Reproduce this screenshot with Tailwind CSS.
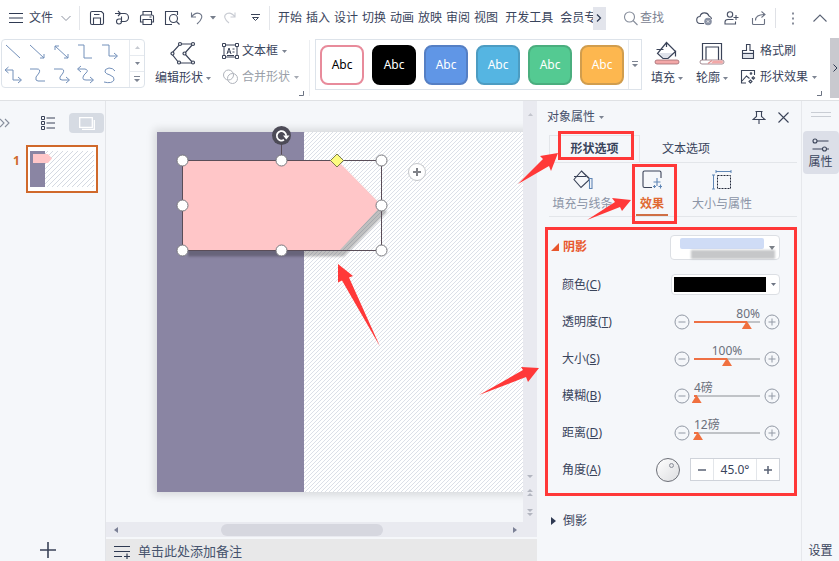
<!DOCTYPE html>
<html lang="zh-CN">
<head>
    <meta charset="UTF-8">
    <meta name="viewport" content="width=device-width, initial-scale=1.0">
    <title>演示文稿 - 对象属性</title>
    <script src="https://cdn.jsdelivr.net/npm/@tailwindcss/browser@4"></script>
</head>
<body class="h-screen flex flex-col overflow-hidden bg-[#f5f7fa] text-xs text-[#39445c] font-['Noto_Sans','Noto_Sans_CJK_SC',sans-serif]">

    <!-- Menu bar -->
    <header class="h-9 shrink-0 flex items-center bg-white whitespace-nowrap">
        <button class="w-[79px] h-6 pl-2 flex items-center gap-[5px] shrink-0">
            <svg class="w-4 h-4" viewBox="0 0 16 16" stroke="#2f3a52" stroke-width="1.2"><path d="M1 3.5h14M1 8h14M1 12.5h14"/></svg>
            文件
            <svg class="w-3 h-3 ml-0.5" viewBox="0 0 12 12" fill="none" stroke="#8d93a1"><path d="M1.500 4l4.500 4.500L10.500 4"/></svg>
        </button>
        <div class="h-6 pl-1 border-x border-[#e4e6ea] flex items-center shrink-0">
            <button aria-label="保存" class="w-[25px] flex justify-center"><svg class="w-4 h-4" viewBox="0 0 16 16" fill="none" stroke="#3a4358" stroke-width="1.1"><path d="M1.500 3q0-1.500 1.500-1.500h9.500l2 2V13q0 1.500-1.500 1.500H3q-1.500 0-1.500-1.500zM4.500 14V8h7v6M5 4.500h5.500"/></svg></button>
            <button aria-label="输出" class="w-[25px] flex justify-center"><svg class="w-4 h-4" viewBox="0 0 16 16" fill="none" stroke="#3a4358" stroke-width="1.1"><path d="M1 3.500h9.500a4 4 0 0 1 0 8H6.500M4 1l2.500 2.500L4 6M7.500 6.500v5a2.500 2.500 0 1 1-2.500-2.500h2.500"/></svg></button>
            <button aria-label="打印" class="w-[25px] flex justify-center"><svg class="w-4 h-4" viewBox="0 0 16 16" fill="none" stroke="#3a4358" stroke-width="1.1"><path d="M4 5V1.500h8.500V5M4 12H1.500V6.500Q1.500 5 3 5h10q1.500 0 1.500 1.500V12H12.500M4 9.500h8.500v5H4zM10.500 7h2"/></svg></button>
            <button aria-label="打印预览" class="w-[25px] flex justify-center"><svg class="w-4 h-4" viewBox="0 0 16 16" fill="none" stroke="#3a4358" stroke-width="1.1"><path d="M13.500 5V1.500h-12v13H8"/><circle cx="9.500" cy="8.500" r="4"/><path d="M12.500 11.500l3 3"/></svg></button>
            <button aria-label="撤销" class="w-[25px] flex justify-center"><svg class="w-4 h-4" viewBox="0 0 16 16" fill="none" stroke="#6f7788" stroke-width="1.1"><path d="M2.500 2.500v4.500h4.500M2.500 7C5 3.500 8 2.500 10.500 3.500c4 2 2.500 6-2.500 10.500"/></svg></button>
            <button aria-label="撤销列表" class="w-2 flex justify-center"><svg class="w-[6px] h-[4px]" viewBox="0 0 6 4" fill="#777e8c"><path d="M0 0h6L3 3.500z"/></svg></button>
            <button aria-label="恢复" class="w-[25px] flex justify-center"><svg class="w-4 h-4" viewBox="0 0 16 16" fill="none" stroke="#c9ccd3" stroke-width="1.100"><path d="M13 2.500v4.500H8.500M13 7C10.500 3.500 7.500 2.500 5 3.500 1 5.500 2.500 9.500 7 13"/></svg></button>
            <button aria-label="自定义" class="w-[27px] flex justify-center"><svg class="w-[9px] h-2" viewBox="0 0 9 8" fill="none" stroke="#3a4358"><path d="M0 .5h9M1.500 3.500h6l-3 3z"/></svg></button>
        </div>
        <nav class="flex-1 min-w-0 overflow-hidden pl-2 flex gap-1">
            <a href="#">开始</a>
            <a href="#">插入</a>
            <a href="#">设计</a>
            <a href="#">切换</a>
            <a href="#">动画</a>
            <a href="#">放映</a>
            <a href="#">审阅</a>
            <a href="#">视图</a>
            <a href="#" class="mx-[3px]">开发工具</a>
            <a href="#">会员专享</a>
        </nav>
        <div class="shrink-0 flex items-center pr-3">
            <button aria-label="更多选项卡" class="w-[13px] h-[23px] bg-[#e3e5ec] flex items-center justify-center"><svg class="w-[6px] h-2" viewBox="0 0 6 8" fill="none" stroke="#2f3a52" stroke-width="1.200"><path d="M1 .5L4.500 4 1 7.500"/></svg></button>
            <button class="ml-[17px] flex items-center gap-px text-[#7b8291]">
                <svg class="w-4 h-4" viewBox="0 0 16 16" fill="none" stroke="#868d9b" stroke-width="1.100"><circle cx="6.500" cy="7" r="5"/><path d="M10 10.500l4.500 4.500"/></svg>
                查找
            </button>
            <button aria-label="云同步" class="ml-8"><svg class="block w-[17px] h-4" viewBox="0 0 17 16" fill="none" stroke="#4a5266" stroke-width="1.100"><path d="M8 13.500H4.500a3.500 3.500 0 0 1-.5-7 4.700 4.700 0 0 1 9-.5q2.500 1 2.500 3"/><circle cx="12" cy="11.500" r="3.200" fill="#8991a3" stroke="#8991a3"/><path d="M10.800 10.300l2.400 2.400M13.200 10.300l-2.400 2.400" stroke="#fff" stroke-width=".8"/></svg></button>
            <button aria-label="协作" class="ml-[11px]"><svg class="block w-[15px] h-4" viewBox="0 0 15 16" fill="none" stroke="#4a5266" stroke-width="1.100"><circle cx="6" cy="4.500" r="2.700"/><path d="M9.500 9.500H4Q1 9.500 1 12v2h10.500v-2.500M12 5v5M9.500 7.500h5"/></svg></button>
            <button aria-label="分享" class="ml-3"><svg class="block w-4 h-4" viewBox="0 0 16 16" fill="none" stroke="#6b7283" stroke-width="1.100"><path d="M1.500 8v5.500q0 1 1 1h10q1 0 1-1V9M4.500 10.500c0-4 3-6 9-6M10.500 1.500l3.500 3-3.500 3"/></svg></button>
            <span class="ml-2 h-5 border-l border-[#dfe1e6]"></span>
            <button aria-label="更多" class="ml-[15px]"><svg class="block w-1 h-4" viewBox="0 0 4 16" fill="#6b7283"><path d="M1.200 2.500h1.600v2H1.200zM1.200 7.500h1.600v2H1.200zM1.200 12.500h1.600v2H1.200z"/></svg></button>
            <button aria-label="收起功能区" class="ml-[18px]"><svg class="block w-[14px] h-4" viewBox="0 0 14 16" fill="none" stroke="#5a6274" stroke-width="1.100"><path d="M.5 11.500L7 5l6.500 6.500"/></svg></button>
        </div>
    </header>

    <!-- Ribbon -->
    <section class="h-[65px] shrink-0 flex bg-white border-b border-[#dfe1e4] whitespace-nowrap">
        <!-- Connector gallery -->
        <div class="ml-px mt-[3px] w-[144px] h-[49px] shrink-0 flex border border-[#dde3ea] rounded-sm">
            <svg class="w-[127px] h-[47px]" viewBox="0 0 127 47" fill="none" stroke="#7390ba">
                <path d="M4 5l14 13M28 5l14 13M42 14v4h-4M53 6l13 12M53 10V6h4M66 14v4h-4M76 5h6v13h8M100 5h7v11h8M112 13l3.500 3-3.500 3"/>
                <path d="M4 30h7v10h8M6.500 27L3 30l3.500 3M16 37l3.500 3-3.500 3M28 29h7q4 0 2 4l-3 4q-1 4 2 4h7M52 29h7q4 0 2 4l-3 4q-1 3 2 3h7M64 37l3.500 3-3.500 3M76 29h7q4 1 1 4l-2 2q-3 5 2 5h7M79 26l-3.500 3 3.500 3M88 37l3.500 3-3.500 3M113 31q-2-3-6-3-5 1-4 4 1 2 5 3 5 2 4 5-2 4-10 2"/>
            </svg>
            <div class="flex-1 flex flex-col border-l border-[#e6eaef]">
                <button aria-label="上一行" class="flex-1 flex items-center justify-center border-b border-[#e6eaef]"><svg class="w-[5px] h-[3px]" viewBox="0 0 5 3" fill="#c6cad1"><path d="M0 3h5L2.500 0z"/></svg></button>
                <button aria-label="下一行" class="flex-1 flex items-center justify-center border-b border-[#e6eaef]"><svg class="w-[5px] h-[3px]" viewBox="0 0 5 3" fill="#7d8492"><path d="M0 0h5L2.500 3z"/></svg></button>
                <button aria-label="展开形状" class="flex-1 flex items-center justify-center"><svg class="w-[6px] h-[7px]" viewBox="0 0 6 7" fill="#7d8492"><path d="M0 0h6v1H0zM0 3h6L3 6z"/></svg></button>
            </div>
        </div>
        <button class="ml-[10px] mt-1 h-[46px] flex flex-col items-center justify-between shrink-0">
            <svg class="w-[26px] h-[26px]" viewBox="0 0 26 26" fill="none" stroke="#3a4358" stroke-width="1.200"><path d="M10 4h13L14.500 13.500 23 23H9L1.500 13.500z"/><g fill="#fff"><circle cx="10" cy="4" r="1.500"/><circle cx="23" cy="4" r="1.500"/><circle cx="14.500" cy="13.500" r="1.500"/><circle cx="2.500" cy="13.500" r="1.500"/><circle cx="9" cy="22.500" r="1.500"/><circle cx="23" cy="22.500" r="1.500"/></g></svg>
            <span class="h-4 leading-4 flex items-center gap-[3px]">编辑形状 <svg class="w-[5px] h-[3px]" viewBox="0 0 5 3" fill="#7d8492"><path d="M0 0h5L2.500 3z"/></svg></span>
        </button>
        <div class="ml-[11px] mt-1 h-[49px] flex flex-col justify-between pt-[3px] pb-1 shrink-0">
            <button class="h-4 flex items-center gap-[3px]">
                <svg class="w-[17px] h-4" viewBox="0 0 17 16" fill="none" stroke="#3a4358"><path d="M2 2h13v12H2z"/><g fill="#fff"><path d="M.5.5h3v3h-3zM13.500.5h3v3h-3zM.5 12.500h3v3h-3zM13.500 12.500h3v3h-3z"/></g><path d="M5 11l2-6 2 6M5.500 9h3M5 12.500h7M10.500 6h2M10.500 9h2"/></svg>
                文本框 <svg class="w-[5px] h-[3px] ml-px" viewBox="0 0 5 3" fill="#7d8492"><path d="M0 0h5L2.500 3z"/></svg>
            </button>
            <button class="h-4 flex items-center gap-[3px] text-[#9a9fa9]">
                <svg class="w-[17px] h-4" viewBox="0 0 17 16" fill="none" stroke="#b0b4bc"><circle cx="6.500" cy="6" r="5"/><circle cx="10.500" cy="9.500" r="5"/></svg>
                合并形状 <svg class="w-[5px] h-[3px] ml-px" viewBox="0 0 5 3" fill="#a5a9b2"><path d="M0 0h5L2.500 3z"/></svg>
            </button>
        </div>
        <button aria-label="形状设置" class="self-end mb-1 mr-[5px] shrink-0"><svg class="block w-[5px] h-[5px]" viewBox="0 0 5 5" fill="none" stroke="#6d7483"><path d="M4.500 0v4.500H0"/></svg></button>

        <!-- Shape styles -->
        <div class="border-l border-[#eceef1] mt-1 mb-1 shrink-0"></div>
        <div class="ml-[5px] mt-[3px] w-[327px] h-[51px] shrink-0 pl-1 flex items-center gap-2 border border-[#dde3ea] text-white">
            <button class="w-11 h-10 shrink-0 rounded-lg border-2 border-[#e88b9b] bg-white text-black">Abc</button>
            <button class="w-11 h-10 shrink-0 rounded-lg border-2 border-black bg-black">Abc</button>
            <button class="w-11 h-10 shrink-0 rounded-lg border-2 border-[#557fc4] bg-[#6096e6]">Abc</button>
            <button class="w-11 h-10 shrink-0 rounded-lg border-2 border-[#4c9cc2] bg-[#55b5e2]">Abc</button>
            <button class="w-11 h-10 shrink-0 rounded-lg border-2 border-[#4aae7e] bg-[#54ca92]">Abc</button>
            <button class="w-11 h-10 shrink-0 rounded-lg border-2 border-[#d19d4d] bg-[#fdb74f]">Abc</button>
            <button aria-label="更多样式" class="-ml-1 flex-1 h-full flex items-center justify-center border-l border-[#e6eaef]"><svg class="w-[6px] h-[7px]" viewBox="0 0 6 7" fill="#7d8492"><path d="M0 0h6v1H0zM0 3h6L3 6z"/></svg></button>
        </div>
        <button class="ml-[9px] mt-1 h-[46px] flex flex-col items-center justify-between shrink-0">
            <svg class="w-[26px] h-[26px]" viewBox="0 0 26 26" fill="none" stroke="#3a4358" stroke-width="1.200"><path d="M5 13h16l-6 5.500h-5z" fill="#dfe2ea" stroke="none"/><path d="M12.500 3v4M2.500 9.500h7M12.500 2.500l9 9-7.500 7H9L3.500 13.500zM21.500 10.500v6"/><rect x="1" y="20" width="24" height="4" rx="2" fill="#f3a8a8" stroke="#a06a70" stroke-width=".8"/></svg>
            <span class="h-4 leading-4 flex items-center gap-[3px]">填充 <svg class="w-[5px] h-[3px]" viewBox="0 0 5 3" fill="#7d8492"><path d="M0 0h5L2.500 3z"/></svg></span>
        </button>
        <button class="ml-[13px] mt-1 h-[46px] flex flex-col items-center justify-between shrink-0">
            <svg class="w-[26px] h-[26px]" viewBox="0 0 26 26" fill="none" stroke="#3a4358" stroke-width="1.200"><path d="M3.500 20V3.500h19V20M7 20V7h12.500v13"/><rect x="1" y="20" width="24" height="4" rx="2" fill="#fff" stroke="#8b7078" stroke-width=".8"/><path d="M9 23.500l4-3" stroke="#e08a8a"/><path d="M14 20.500h9.500q1 1.500 0 3H12z" fill="#f3a8a8" stroke="none"/></svg>
            <span class="h-4 leading-4 flex items-center gap-[3px]">轮廓 <svg class="w-[5px] h-[3px]" viewBox="0 0 5 3" fill="#7d8492"><path d="M0 0h5L2.500 3z"/></svg></span>
        </button>
        <div class="ml-3 mt-1 h-[49px] flex flex-col justify-between pt-[3px] pb-1 shrink-0">
            <button class="h-4 flex items-center gap-1">
                <svg class="w-4 h-4" viewBox="0 0 16 16" fill="none" stroke="#3a4358" stroke-width="1.100"><path d="M3 9h10v6H3z" fill="#dfe3ea" stroke="none"/><path d="M2.500 15.500V7.500h4v-6h3.500v6h3.500v8zM2.500 10.500h11"/></svg>
                格式刷
            </button>
            <button class="h-4 flex items-center gap-1">
                <svg class="w-4 h-4" viewBox="0 0 16 16" fill="none" stroke="#3a4358" stroke-width="1.100"><path d="M4 1.500H1.500V14H6M1.500 1.500h13V6M2 12l4.500-5 3 2.500M9 12.500l1.500-1.500L12 12.500l-1.500 1.500zM12 9l1.300-1.300L14.600 9l-1.300 1.300z"/><circle cx="11" cy="4.500" r=".8"/></svg>
                形状效果 <svg class="w-[5px] h-[3px]" viewBox="0 0 5 3" fill="#7d8492"><path d="M0 0h5L2.500 3z"/></svg>
            </button>
        </div>
        <button aria-label="效果设置" class="self-end mb-1 ml-auto mr-2 shrink-0"><svg class="block w-[5px] h-[5px]" viewBox="0 0 5 5" fill="none" stroke="#6d7483"><path d="M4.500 0v4.500H0"/></svg></button>
        <button aria-label="向右滚动" class="mt-0.5 mb-[2px] w-[10px] shrink-0 bg-[#c9c9cf] flex items-center justify-center"><svg class="w-[5px] h-2" viewBox="0 0 5 8" fill="none" stroke="#2f3a52"><path d="M.5.5L4 4 .5 7.500"/></svg></button>
    </section>

    <div class="flex-1 min-h-0 flex">

        <!-- Slide list -->
        <aside class="w-[106px] shrink-0 flex flex-col border-r border-[#e3e5e9]">
            <div class="mt-3 h-5 flex items-center">
                <button aria-label="收起"><svg class="block w-[10px] h-[10px]" viewBox="0 0 10 10" fill="none" stroke="#878e9c" stroke-width="1.100"><path d="M0 1l4 4-4 4M5 1l4 4-4 4"/></svg></button>
                <button aria-label="大纲" class="ml-[31px]"><svg class="block w-[14px] h-[14px]" viewBox="0 0 14 14" fill="none" stroke="#3a4358"><path d="M.5.5h3v3h-3zM.5 5.500h3v3h-3zM.5 10.500h3v3h-3zM5.500 2h8.500M5.500 7h8.500M5.500 12h8.500"/></svg></button>
                <button aria-label="幻灯片" class="ml-[14px] w-[35px] h-5 rounded-sm bg-[#d6dbe3] flex items-center justify-center"><svg class="w-4 h-[13px]" viewBox="0 0 16 13" fill="none" stroke="#fff" stroke-width="1.300"><path d="M.7.7h12.600v9.600H.7zM3 12.300h12.300V3"/></svg></button>
            </div>
            <div class="mt-3 pl-[13px] flex items-start gap-[6px]">
                <span class="w-[7px] mt-2 leading-4 font-bold text-[#cf6a2c]">1</span>
                <button aria-label="幻灯片 1" class="border-2 border-[#d0692b] bg-white p-0.5">
                    <svg class="block w-16 h-10" viewBox="0 0 64 40">
                        <defs><pattern id="hatch-small" width="5" height="5" patternUnits="userSpaceOnUse"><path d="M-1 1L1-1M0 5L5 0M4 6L6 4" stroke="#c9cfdb" stroke-width=".8"/></pattern></defs>
                        <rect y="2" width="64" height="36" fill="url(#hatch-small)"/>
                        <rect y="2" width="15" height="36" fill="#8a85a3"/>
                        <path d="M3 5h15l4 4.500-4 4.500H3z" fill="#ffc6c8"/>
                    </svg>
                </button>
            </div>
            <button aria-label="新建幻灯片" class="mt-auto mb-[3px] ml-10 w-4"><svg class="block w-4 h-4" viewBox="0 0 16 16" stroke="#3a4358" stroke-width="1.600"><path d="M8 0v16M0 8h16"/></svg></button>
        </aside>

        <!-- Slide editor -->
        <main class="flex-1 min-w-0 flex flex-col">
            <div class="flex-1 min-h-0 flex">
                <div class="flex-1 min-w-0 overflow-hidden pl-[51px] pt-[31px]">
                    <div class="w-[640px] h-[360px] bg-white shadow-[0_0_8px_3px_rgba(0,0,0,0.12)]">
                        <svg class="block w-full h-full overflow-visible" viewBox="0 0 640 360">
                            <defs>
                                <pattern id="hatch" width="4" height="4" patternUnits="userSpaceOnUse"><path d="M-1 1L1-1M0 4L4 0M3 5L5 3" stroke="#cdd3de" stroke-width=".7"/></pattern>
                                <filter id="soft" x="-10%" y="-10%" width="120%" height="120%"><feGaussianBlur stdDeviation="1"/></filter>
                            </defs>
                            <rect width="640" height="360" fill="url(#hatch)"/>
                            <rect width="147" height="360" fill="#8a85a3"/>
                            <path d="M31 35h154l45 45-43 44.500H31z" fill="#000" fill-opacity=".25" filter="url(#soft)"/>
                            <path d="M25.500 28.500h155l44 45-42 45h-157z" fill="#ffc6c8"/>
                            <path d="M25.500 28.500h199v90h-199zM124.500 28V12" fill="none" stroke="#5a4d58"/>
                            <g fill="#fff" stroke="#77777d">
                                <circle cx="25.500" cy="28.500" r="5.500"/><circle cx="124.500" cy="28.500" r="5.500"/><circle cx="224.500" cy="28.500" r="5.500"/>
                                <circle cx="25.500" cy="73.500" r="5.500"/><circle cx="224.500" cy="73.500" r="5.500"/>
                                <circle cx="25.500" cy="118.500" r="5.500"/><circle cx="124.500" cy="118.500" r="5.500"/><circle cx="224.500" cy="118.500" r="5.500"/>
                            </g>
                            <path d="M180 22l6.500 6.500-6.500 6.500-6.500-6.500z" fill="#fdfc80" stroke="#7a7a4e"/>
                            <circle cx="124.500" cy="3.500" r="9.500" fill="#4d4b57"/>
                            <path d="M127 7.800a4.700 4.700 0 1 1 2.200-4" fill="none" stroke="#fff" stroke-width="1.800"/><path d="M126 3.500h6.500l-3.200 4z" fill="#fff"/>
                            <circle cx="260" cy="40" r="8.500" fill="#fff" stroke="#c4c6ca"/>
                            <path d="M260 36v8M256 40h8" stroke="#808288" stroke-width="2"/>
                            <path d="M181 132l15 12-4 1.500 31 69-38-66-4 2z" fill="#ff3838"/>
                        </svg>
                    </div>
                </div>
                <div class="w-[14px] shrink-0 bg-[#e9eaf0] flex flex-col items-center pt-3 pb-[5px]">
                    <svg class="w-[5px] h-[3px]" viewBox="0 0 5 3" fill="#c3c5cd"><path d="M0 3h5L2.500 0z"/></svg>
                    <svg class="mt-auto w-[6px] h-11" viewBox="0 0 6 44" fill="#b3b6c0"><path d="M0 2h6L3 5zM0 19h6l-3-3zM0 23h6l-3-3zM0 36h6l-3 3zM0 40h6l-3 3z"/></svg>
                </div>
            </div>
            <div class="h-[15px] shrink-0 flex items-center bg-[#e9eaf0] pl-2 pr-5">
                <svg class="w-1 h-[6px]" viewBox="0 0 4 6" fill="#7b8096"><path d="M4 0v6L0 3z"/></svg>
                <div class="flex-1 flex"><div class="ml-[26%] w-[41%] h-3 rounded-full bg-[#d6d7df]"></div></div>
                <svg class="w-1 h-[6px]" viewBox="0 0 4 6" fill="#7b8096"><path d="M0 0v6l4-3z"/></svg>
            </div>
            <div class="h-6 shrink-0 flex items-center gap-2 pl-2 pt-[3px] border-t-2 border-[#f5f7fa] bg-[#e8e8e9] text-[13px] text-[#46536d]">
                <svg class="w-4 h-[14px]" viewBox="0 0 16 14" stroke="#2f3a52" stroke-width="1.200"><path d="M0 1.500h16M0 6.500h16M0 11.500h8M10 11.500h6M13 8.500v6"/></svg>
                <button>单击此处添加备注</button>
            </div>
        </main>

        <!-- Object properties -->
        <aside class="relative w-[264px] shrink-0 flex flex-col pl-2 pr-1">
            <div class="h-8 flex items-center pl-0.5 pr-2">
                <button class="flex items-center gap-1 text-[#46506a]">对象属性 <svg class="w-[5px] h-[3px]" viewBox="0 0 5 3" fill="#7d8492"><path d="M0 0h5L2.500 3z"/></svg></button>
                <button aria-label="固定" class="ml-auto"><svg class="block w-[14px] h-[14px]" viewBox="0 0 14 14" fill="none" stroke="#3a4358" stroke-width="1.100"><path d="M3.500 1.500h7M4.500 1.500v5L1 9.500h12L9.500 6.500v-5M7 9.500V14"/></svg></button>
                <button aria-label="关闭" class="ml-3"><svg class="block w-[11px] h-[11px]" viewBox="0 0 11 11" stroke="#3a4358" stroke-width="1.100"><path d="M.5.5l10 10M10.500.5l-10 10"/></svg></button>
            </div>
            <div class="h-[30px] flex border-b border-[#e3e6ea] ml-1" role="tablist">
                <button role="tab" class="mt-0.5 w-[91px] border-x border-t border-[#e3e6ea] font-bold">形状选项</button>
                <button role="tab" class="mt-0.5 w-[92px]">文本选项</button>
            </div>
            <div class="h-[54px] flex border-b border-[#e3e6ea] ml-1 text-[#8b94a6]" role="tablist">
                <button role="tab" class="w-[67px] flex flex-col items-center pt-[7px]">
                    <svg class="w-5 h-5" viewBox="0 0 20 20" fill="none" stroke="#3a4358" stroke-width="1.100"><path d="M1 6.500h12M8.500 1L1 9.500l7 8 8-7.500V8zM8.500 1l7 7"/><path d="M16.500 8.500h2.500v10h-2.500z" stroke="#5f86b5"/></svg>
                    <span class="mt-1 leading-5">填充与线条</span>
                </button>
                <button role="tab" class="ml-[20px] w-8 flex flex-col items-center pt-[7px] border-b-2 border-[#cf6f45] font-bold text-[#e06a33]">
                    <svg class="w-5 h-5 shrink-0" viewBox="0 0 20 20" fill="none" stroke="#3a4358" stroke-width="1.100"><path d="M10 17.500H2.500q-1.500 0-1.500-1.500V2.500Q1 1 2.500 1h15Q19 1 19 2.500V8"/><path d="M15 8v8M11.500 12h7M18.500 14.500v4M16.500 16.500h4M12.500 15v3M11 16.500h3" stroke="#5f86b5"/></svg>
                    <span class="mt-1 leading-5">效果</span>
                </button>
                <button role="tab" class="ml-[24px] flex flex-col items-center pt-[7px]">
                    <svg class="w-5 h-5" viewBox="0 0 20 20" fill="none" stroke="#5f86b5"><path d="M4 1.500h15M4 0v3M19 0v3M1.500 5v14M0 5h3M0 19h3"/><path d="M5.500 5.500h13v13h-13z" stroke="#1f2638" stroke-dasharray="2 1"/></svg>
                    <span class="mt-1 leading-5">大小与属性</span>
                </button>
            </div>

            <!-- Shadow settings -->
            <section class="mt-[10px] px-[14px] pb-[5px] shrink-0 border-3 border-[#ff3838]">
                <div class="h-[34px] mb-0.5 flex items-center justify-between">
                    <button class="-ml-[11px] flex items-center gap-1 font-bold text-[#e8562c]"><svg class="w-2 h-2" viewBox="0 0 8 8" fill="#e8562c"><path d="M8 0v8H0z"/></svg>阴影</button>
                    <div class="relative w-[110px]">
                        <select aria-label="阴影" class="block w-full h-[25px] appearance-none rounded-sm border border-[#dcdfe4] bg-white"><option></option></select>
                        <span class="absolute left-[10px] top-[3px] w-[84px] h-[11px] rounded-xs bg-[#cfdcf6] pointer-events-none"></span>
                        <span class="absolute left-[21px] top-[15px] w-[84px] h-[9px] bg-[#c6c7c9] blur-[1px] pointer-events-none"></span>
                        <svg class="absolute right-[5px] top-[11px] w-[6px] h-[4px] pointer-events-none" viewBox="0 0 6 4" fill="#7b8088"><path d="M0 0h6L3 4z"/></svg>
                    </div>
                </div>
                <div class="h-[37px] flex items-center justify-between">
                    <label for="color">颜色(<u>C</u>)</label>
                    <div class="relative w-[109px]">
                        <select id="color" class="block w-full h-[21px] appearance-none rounded-sm border border-[#dcdfe4] bg-white"><option></option></select>
                        <span class="absolute left-[3px] top-[3px] w-[92px] h-[15px] bg-black pointer-events-none"></span>
                        <svg class="absolute right-1 top-[9px] w-[5px] h-[3px] pointer-events-none" viewBox="0 0 5 3" fill="#6d7483"><path d="M0 0h5L2.500 3z"/></svg>
                    </div>
                </div>
                <div class="h-[37px] flex items-center">
                    <label for="alpha" class="mr-auto">透明度(<u>T</u>)</label>
                    <button aria-label="减少透明度"><svg class="block w-4 h-4" viewBox="0 0 16 16" fill="none" stroke="#9299a5"><circle cx="8" cy="8" r="7"/><path d="M4.500 8h7"/></svg></button>
                    <div class="relative w-[66px] h-[37px] mx-1 text-[#6b707c]">
                        <output for="alpha" class="block pt-[3px] h-[18px] leading-4 text-right">80%</output>
                        <div class="h-0.5" style="background:linear-gradient(90deg,#ee7044 80%,#c0c3c7 80%)"></div>
                        <input id="alpha" type="range" min="0" max="100" value="80" class="absolute -left-[5px] top-[18px] w-[76px] h-2 appearance-none bg-transparent [&::-webkit-slider-thumb]:appearance-none [&::-webkit-slider-thumb]:w-[10px] [&::-webkit-slider-thumb]:h-2 [&::-webkit-slider-thumb]:bg-[#f0703f] [&::-webkit-slider-thumb]:[clip-path:polygon(50%_0,100%_100%,0_100%)]">
                    </div>
                    <button aria-label="增加透明度"><svg class="block w-4 h-4" viewBox="0 0 16 16" fill="none" stroke="#9299a5"><circle cx="8" cy="8" r="7"/><path d="M4.500 8h7M8 4.500v7"/></svg></button>
                </div>
                <div class="h-[37px] flex items-center">
                    <label for="size" class="mr-auto">大小(<u>S</u>)</label>
                    <button aria-label="减小"><svg class="block w-4 h-4" viewBox="0 0 16 16" fill="none" stroke="#9299a5"><circle cx="8" cy="8" r="7"/><path d="M4.500 8h7"/></svg></button>
                    <div class="relative w-[66px] h-[37px] mx-1 text-[#6b707c]">
                        <output for="size" class="block pt-[3px] h-[18px] leading-4 text-center">100%</output>
                        <div class="h-0.5" style="background:linear-gradient(90deg,#ee7044 50%,#c0c3c7 50%)"></div>
                        <input id="size" type="range" min="0" max="200" value="100" class="absolute -left-[5px] top-[18px] w-[76px] h-2 appearance-none bg-transparent [&::-webkit-slider-thumb]:appearance-none [&::-webkit-slider-thumb]:w-[10px] [&::-webkit-slider-thumb]:h-2 [&::-webkit-slider-thumb]:bg-[#f0703f] [&::-webkit-slider-thumb]:[clip-path:polygon(50%_0,100%_100%,0_100%)]">
                    </div>
                    <button aria-label="增大"><svg class="block w-4 h-4" viewBox="0 0 16 16" fill="none" stroke="#9299a5"><circle cx="8" cy="8" r="7"/><path d="M4.500 8h7M8 4.500v7"/></svg></button>
                </div>
                <div class="h-[37px] flex items-center">
                    <label for="blur" class="mr-auto">模糊(<u>B</u>)</label>
                    <button aria-label="减少模糊"><svg class="block w-4 h-4" viewBox="0 0 16 16" fill="none" stroke="#9299a5"><circle cx="8" cy="8" r="7"/><path d="M4.500 8h7"/></svg></button>
                    <div class="relative w-[66px] h-[37px] mx-1 text-[#6b707c]">
                        <output for="blur" class="block pt-[3px] h-[18px] leading-4">4磅</output>
                        <div class="h-0.5" style="background:linear-gradient(90deg,#ee7044 4%,#c0c3c7 4%)"></div>
                        <input id="blur" type="range" min="0" max="100" value="4" class="absolute -left-[5px] top-[18px] w-[76px] h-2 appearance-none bg-transparent [&::-webkit-slider-thumb]:appearance-none [&::-webkit-slider-thumb]:w-[10px] [&::-webkit-slider-thumb]:h-2 [&::-webkit-slider-thumb]:bg-[#f0703f] [&::-webkit-slider-thumb]:[clip-path:polygon(50%_0,100%_100%,0_100%)]">
                    </div>
                    <button aria-label="增加模糊"><svg class="block w-4 h-4" viewBox="0 0 16 16" fill="none" stroke="#9299a5"><circle cx="8" cy="8" r="7"/><path d="M4.500 8h7M8 4.500v7"/></svg></button>
                </div>
                <div class="h-[37px] flex items-center">
                    <label for="distance" class="mr-auto">距离(<u>D</u>)</label>
                    <button aria-label="减少距离"><svg class="block w-4 h-4" viewBox="0 0 16 16" fill="none" stroke="#9299a5"><circle cx="8" cy="8" r="7"/><path d="M4.500 8h7"/></svg></button>
                    <div class="relative w-[66px] h-[37px] mx-1 text-[#6b707c]">
                        <output for="distance" class="block pt-[3px] h-[18px] leading-4">12磅</output>
                        <div class="h-0.5" style="background:linear-gradient(90deg,#ee7044 6%,#c0c3c7 6%)"></div>
                        <input id="distance" type="range" min="0" max="200" value="12" class="absolute -left-[5px] top-[18px] w-[76px] h-2 appearance-none bg-transparent [&::-webkit-slider-thumb]:appearance-none [&::-webkit-slider-thumb]:w-[10px] [&::-webkit-slider-thumb]:h-2 [&::-webkit-slider-thumb]:bg-[#f0703f] [&::-webkit-slider-thumb]:[clip-path:polygon(50%_0,100%_100%,0_100%)]">
                    </div>
                    <button aria-label="增加距离"><svg class="block w-4 h-4" viewBox="0 0 16 16" fill="none" stroke="#9299a5"><circle cx="8" cy="8" r="7"/><path d="M4.500 8h7M8 4.500v7"/></svg></button>
                </div>
                <div class="h-[37px] flex items-center">
                    <label for="angle" class="mr-auto">角度(<u>A</u>)</label>
                    <svg class="w-[26px] h-[26px] mr-[9px]" viewBox="0 0 26 26"><defs><linearGradient id="knob" x1="0" y1="0" x2="1" y2="1"><stop offset="0" stop-color="#fff"/><stop offset="1" stop-color="#dcdde0"/></linearGradient></defs><circle cx="13" cy="13" r="11.500" fill="url(#knob)" stroke="#6d7078"/><circle cx="16.500" cy="8.500" r="2" fill="#e6e7ea" stroke="#8b8f98"/></svg>
                    <div class="w-[90px] h-[23px] flex items-center border border-[#cfd3da] bg-white">
                        <button aria-label="减少角度" class="w-[23px] h-full flex items-center justify-center border-r border-[#e3e6ea]"><svg class="w-2 h-2" viewBox="0 0 8 8" stroke="#5a6274" stroke-width="1.500"><path d="M0 4h8"/></svg></button>
                        <input id="angle" type="text" value="45.0°" class="flex-1 min-w-0 h-full text-center">
                        <button aria-label="增加角度" class="w-[23px] h-full flex items-center justify-center border-l border-[#e3e6ea]"><svg class="w-2 h-2" viewBox="0 0 8 8" stroke="#5a6274" stroke-width="1.500"><path d="M0 4h8M4 0v8"/></svg></button>
                    </div>
                </div>
            </section>
            <button class="mt-[15px] pl-[6px] h-5 flex items-center gap-[7px]"><svg class="w-[5px] h-2" viewBox="0 0 5 8" fill="#2f3a52"><path d="M0 0l5 4-5 4z"/></svg>倒影</button>

            <!-- Callouts over the panel -->
            <svg class="absolute -left-15 top-0 w-[324px] h-[300px] overflow-visible pointer-events-none" viewBox="0 0 324 300">
                <g fill="none" stroke="#ff3838" stroke-width="3"><path d="M82.500 31.500h73v26h-73zM156.500 64.500h42v57h-42z"/></g>
                <g fill="#ff3838"><path d="M81 52L74 70l-2-5-31 18 25-25-3-3z"/><path d="M154 99l-9 11-2-4-33 13 28-18-3-4z"/><path d="M62 267l-11 14-2-5-47 18 44-25-2-3z"/></g>
            </svg>
        </aside>

        <!-- Task rail -->
        <aside class="w-[38px] shrink-0 flex flex-col items-center border-l border-[#e6e8ec]">
            <svg class="mt-[11px] w-5 h-[5px]" viewBox="0 0 20 5" stroke="#c9cdd4"><path d="M0 .5h20M0 4.500h20"/></svg>
            <button class="mt-[14px] w-9 h-[43px] pt-0.5 rounded-sm bg-[#dcdfe8] flex flex-col items-center justify-center">
                <svg class="w-[17px] h-[14px]" viewBox="0 0 17 14" fill="none" stroke="#3a4358" stroke-width="1.100"><circle cx="3" cy="3" r="2"/><path d="M5 3h11.500M.5 11h10M15 11h2"/><circle cx="12.500" cy="11" r="2"/></svg>
                <span class="mt-0.5 leading-4">属性</span>
            </button>
            <button class="mt-auto mb-0.5 leading-4">设置</button>
        </aside>
    </div>

</body>
</html>
